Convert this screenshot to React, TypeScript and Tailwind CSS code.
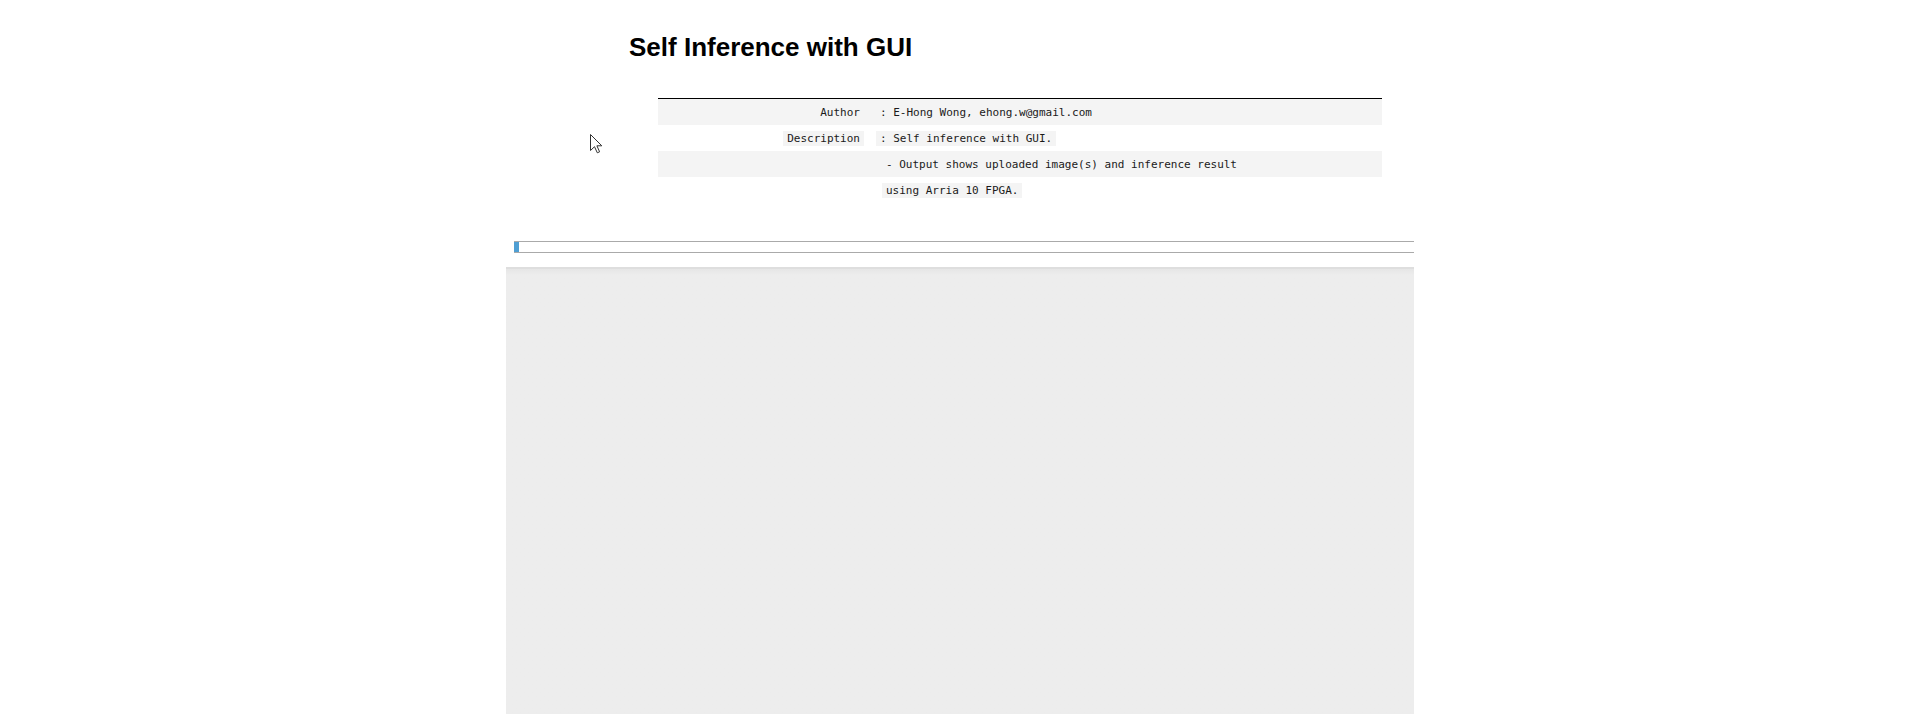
import React from 'react';

const rows = [
  { label: 'Author', value: ': E-Hong Wong, ehong.w@gmail.com', indent: false },
  { label: 'Description', value: ': Self inference with GUI.', indent: false },
  { label: '', value: '- Output shows uploaded image(s) and inference result', indent: true },
  { label: '', value: 'using Arria 10 FPGA.', indent: true },
];

function Code({ children }: { children: React.ReactNode }) {
  return (
    <code className="bg-[#f4f4f4] px-[4px] py-[1px] font-['DejaVu_Sans_Mono',monospace] text-[11px] text-[#1a1a1a] whitespace-pre">
      {children}
    </code>
  );
}

function InfoTable() {
  return (
    <table className="ml-[152px] mt-[36px] w-[724px] border-collapse border-t border-black">
      <tbody>
        {rows.map((row, i) => (
          <tr key={i} className={i % 2 === 0 ? 'bg-[#f4f4f4]' : 'bg-white'}>
            <td className="h-[26px] w-[212px] p-0 pr-[6px] text-right align-middle leading-[14px]">
              {row.label && <Code>{row.label}</Code>}
            </td>
            <td className="h-[26px] p-0 pl-[6px] text-left align-middle leading-[14px]">
              <span className={row.indent ? 'ml-[6px]' : ''}>
                <Code>{row.value}</Code>
              </span>
            </td>
          </tr>
        ))}
      </tbody>
    </table>
  );
}

function Cursor() {
  return (
    <svg className="absolute left-[590px] top-[134px]" width="13" height="20" viewBox="0 0 13 20">
      <path
        d="M0.5 0.5 L0.5 16.5 L4.5 12.7 L7.3 18.8 L9.6 17.8 L6.9 11.8 L11.8 11.8 Z"
        fill="#fff"
        stroke="#333"
        strokeWidth="1"
        strokeLinejoin="miter"
      />
    </svg>
  );
}

export default function App() {
  return (
    <div className="relative flex min-h-[714px] justify-center bg-white font-['Liberation_Sans',Arial,sans-serif]">
      <Cursor />
      <div className="flex w-[908px] flex-col">
        <h1 className="mt-[32px] pl-[123px] text-[26px] font-bold leading-[30px] text-black">
          Self Inference with GUI
        </h1>

        <InfoTable />

        <div className="ml-[8px] mt-[38px] flex h-[12px] w-[900px] border-y border-[#aaaaaa] bg-white">
          <div className="h-full w-[5px] bg-[#4f9fd3]" />
        </div>

        <div className="mt-[14px] flex-1 border-t-2 border-[#dedede] bg-gradient-to-b from-[#e6e6e6] to-[#ededed] to-[6px]" />
      </div>
    </div>
  );
}
